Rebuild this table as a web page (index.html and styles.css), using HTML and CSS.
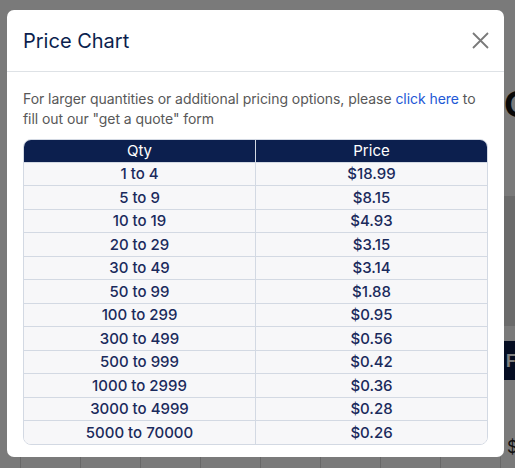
FILE: index.html
```html
<!DOCTYPE html>
<html lang="en">
<head>
<meta charset="utf-8">
<title>Price Chart</title>
<link rel="stylesheet" href="styles.css">
</head>
<body>
<div class="page">
  <div class="side">
    <div class="side-title">Co</div>
    <div class="side-panel"></div>
    <div class="side-btn">Fi</div>
    <div class="side-price">$</div>
  </div>
  <div class="grid-row">
    <span></span><span></span><span></span><span></span><span></span><span></span><span></span><span></span><span></span>
  </div>
</div>

<div class="overlay">
  <div class="modal" role="dialog" aria-labelledby="mt">
    <div class="modal-header">
      <h2 class="modal-title" id="mt">Price Chart</h2>
      <button class="close" aria-label="Close">
        <svg width="17" height="17" viewBox="0 0 17 17"><path d="M1 1 L16 16 M16 1 L1 16" stroke="#7a7a7a" stroke-width="1.8" fill="none"/></svg>
      </button>
    </div>
    <div class="modal-body">
      <p class="intro">For larger quantities or additional pricing options, please <a href="#" class="link">click here</a> to fill out our "get a quote" form</p>
      <div class="table-wrap">
        <table class="price-table">
          <thead><tr><th>Qty</th><th>Price</th></tr></thead>
          <tbody>
            <tr><td>1 to 4</td><td>$18.99</td></tr>
            <tr><td>5 to 9</td><td>$8.15</td></tr>
            <tr><td>10 to 19</td><td>$4.93</td></tr>
            <tr><td>20 to 29</td><td>$3.15</td></tr>
            <tr><td>30 to 49</td><td>$3.14</td></tr>
            <tr><td>50 to 99</td><td>$1.88</td></tr>
            <tr><td>100 to 299</td><td>$0.95</td></tr>
            <tr><td>300 to 499</td><td>$0.56</td></tr>
            <tr><td>500 to 999</td><td>$0.42</td></tr>
            <tr><td>1000 to 2999</td><td>$0.36</td></tr>
            <tr><td>3000 to 4999</td><td>$0.28</td></tr>
            <tr><td>5000 to 70000</td><td>$0.26</td></tr>
          </tbody>
        </table>
      </div>
    </div>
  </div>
</div>
</body>
</html>
```

FILE: styles.css
```css
* { box-sizing: border-box; }
html, body { margin: 0; padding: 0; }
body {
  width: 515px;
  height: 468px;
  overflow: hidden;
  background: #f5f5f5;
  font-family: Inter, "Liberation Sans", sans-serif;
}

/* background page */
.page {
  height: 468px;
  display: flex;
  flex-direction: column;
  overflow: hidden;
}
.side {
  flex: 1;
  padding-left: 504px;
  padding-top: 84px;
  display: flex;
  flex-direction: column;
  overflow: hidden;
  white-space: nowrap;
}
.side-title {
  font-size: 36px;
  font-weight: 700;
  color: #111;
  line-height: 40px;
  width: 11px;
  overflow: hidden;
}
.side-panel {
  margin-top: 73px;
  height: 133px;
  background: #d6d6d6;
  width: 11px;
}
.side-btn {
  margin-top: 15px;
  height: 40px;
  width: 11px;
  overflow: hidden;
  background: #0b1a44;
  color: #fff;
  font-weight: 700;
  font-size: 17px;
  line-height: 40px;
  padding-left: 2px;
}
.side-price {
  margin-top: 56px;
  font-size: 17px;
  color: #222;
  line-height: 22px;
  padding-left: 3px;
  width: 11px;
  overflow: hidden;
}
.grid-row {
  height: 11px;
  display: flex;
  padding-left: 20px;
  overflow: hidden;
}
.grid-row span {
  width: 60px;
  flex: none;
  border-left: 1px solid #d0d0d0;
}

/* overlay & modal */
.overlay {
  position: fixed;
  inset: 0;
  background: rgba(0, 0, 0, 0.5);
  padding: 10px 11px 0 7px;
}
.modal {
  width: 497px;
  height: 447px;
  background: #fff;
  border-radius: 7px;
  display: flex;
  flex-direction: column;
}
.modal-header {
  height: 63px;
  border-bottom: 1px solid #dee2e6;
  display: flex;
  align-items: center;
  justify-content: space-between;
  padding: 0 15px 0 16px;
}
.modal-title {
  margin: 0;
  font-size: 20px;
  font-weight: 400;
  color: #0c1f4e;
}
.close {
  border: 0;
  background: none;
  padding: 0;
  width: 17px;
  height: 17px;
  display: flex;
  cursor: pointer;
}
.modal-body {
  padding: 17px 16px 12px 16px;
}
.intro {
  margin: 0 0 10px;
  font-size: 14px;
  line-height: 20px;
  color: #585858;
  letter-spacing: -0.06px;
}
.link {
  color: #2258d6;
  text-decoration: none;
}
.table-wrap {
  border: 1px solid #d3d9e3;
  border-radius: 8px;
  overflow: hidden;
}
.price-table {
  width: 100%;
  border-collapse: collapse;
  table-layout: fixed;
  font-size: 15px;
}
.price-table th {
  background: #0c1f4e;
  color: #fff;
  font-weight: 400;
  height: 22px;
  padding: 0;
  text-align: center;
}
.price-table th + th { border-left: 1px solid #d3d9e3; }
.price-table td {
  background: #f7f7f9;
  color: #1a2a5c;
  font-weight: 450;
  height: 23.5px;
  padding: 0;
  text-align: center;
  border-top: 1px solid #d3d9e3;
}
.price-table td + td { border-left: 1px solid #d3d9e3; }
```
